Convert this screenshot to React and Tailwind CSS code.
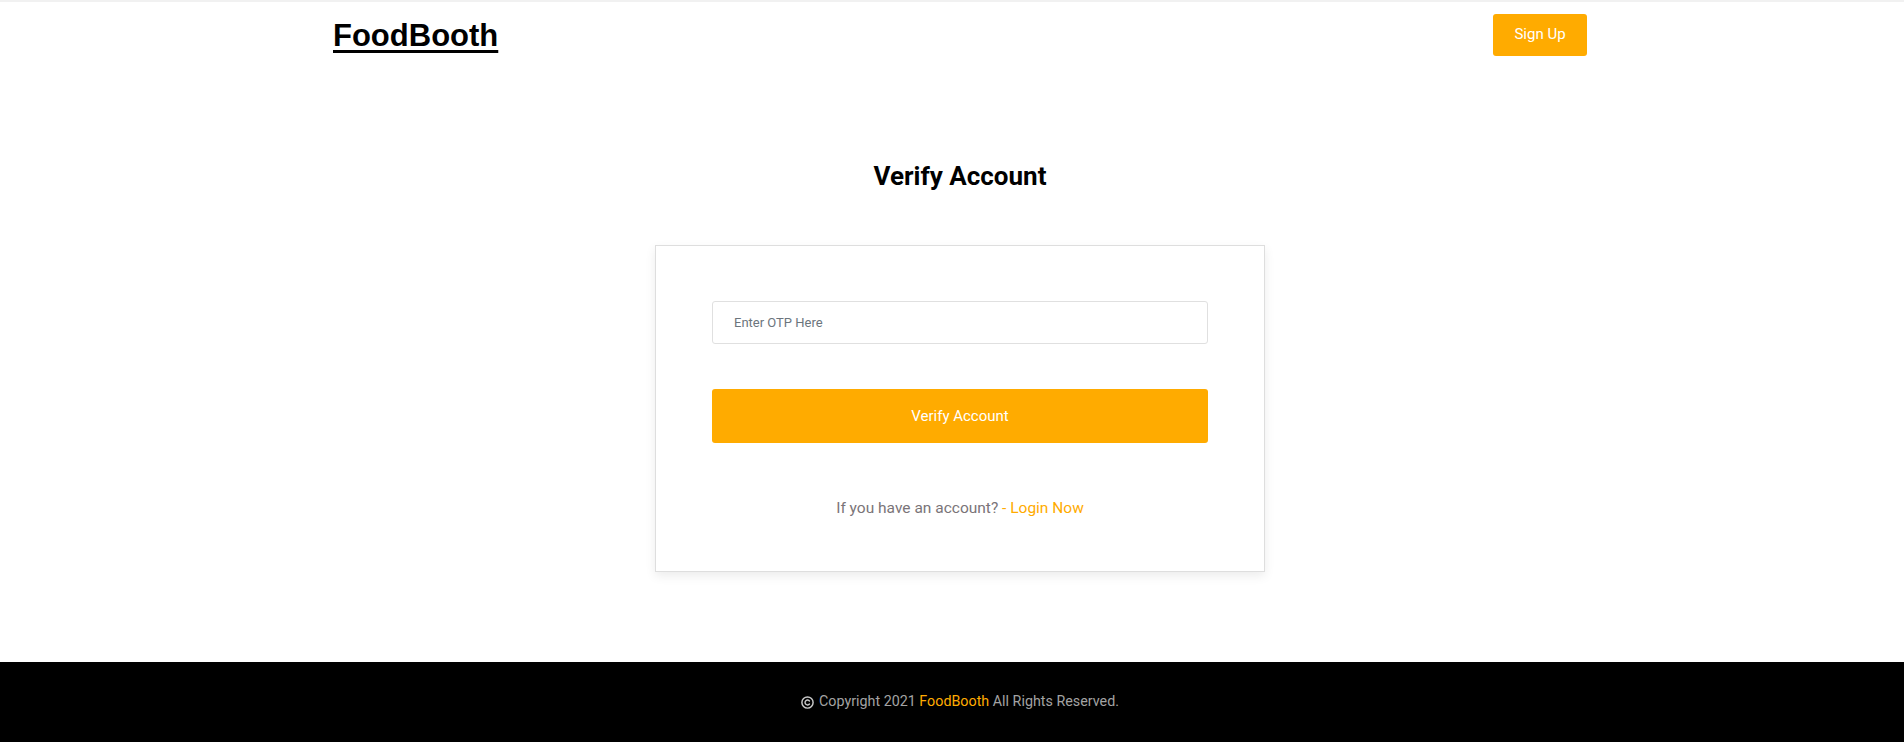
import React from 'react';

function CopyrightIcon() {
    return (
        <svg width="13" height="13" viewBox="0 0 16 16" className="inline-block mr-[5px] align-[-1px]">
            <circle cx="8" cy="8" r="6.9" fill="none" stroke="currentColor" strokeWidth="1.8" />
            <path d="M10.4 6.2 A3 3 0 1 0 10.4 9.8" fill="none" stroke="currentColor" strokeWidth="1.8" strokeLinecap="round" />
        </svg>
    );
}

export default function App() {
    return (
        <div className="min-h-screen bg-white flex flex-col font-['Roboto',sans-serif] border-t-2 border-[#f1f1f1]">
            <header className="h-[66px] flex items-center justify-between pl-[333px] pr-[317px]">
                <a href="#" className="font-['Liberation_Sans',Arial,sans-serif] font-bold text-[31px] leading-none text-black underline decoration-[3px] underline-offset-[4px]">
                    FoodBooth
                </a>
                <button className="w-[94px] h-[42px] mb-[1px] bg-[#ffab00] text-white text-[15px] rounded-[3px]">
                    Sign Up
                </button>
            </header>

            <main className="flex-1 flex flex-col items-center pl-4 pt-[92px]">
                <h1 className="text-[26px] font-bold leading-[32px] text-black">Verify Account</h1>

                <div className="mt-[53px] w-[610px] bg-white border border-[#dedede] shadow-[0_4px_10px_rgba(0,0,0,0.08)] px-14 pt-[55px] pb-[53px]">
                    <input
                        type="text"
                        placeholder="Enter OTP Here"
                        className="w-full h-[43px] border border-[#e0e0e0] rounded-[3px] px-[21px] text-[13px] text-[#555] placeholder:text-[#6c757d] outline-none"
                    />
                    <button className="w-full h-[54px] mt-[45px] bg-[#ffab00] text-white text-[15px] rounded-[3px]">
                        Verify Account
                    </button>
                    <p className="text-center text-[15.5px] text-[#7a7478] mt-[55px] leading-[20px]">
                        If you have an account? <span className="text-[#ffab00]">- Login Now</span>
                    </p>
                </div>
            </main>

            <footer className="h-[80px] mt-[81px] bg-black flex items-center justify-center pl-4">
                <p className="text-[14.3px] text-[#a3a3a3] flex items-center">
                    <span className="text-[#c8c8c8] flex"><CopyrightIcon /></span>
                    <span>Copyright 2021 <span className="text-[#ffab00]">FoodBooth</span> All Rights Reserved.</span>
                </p>
            </footer>
        </div>
    );
}
